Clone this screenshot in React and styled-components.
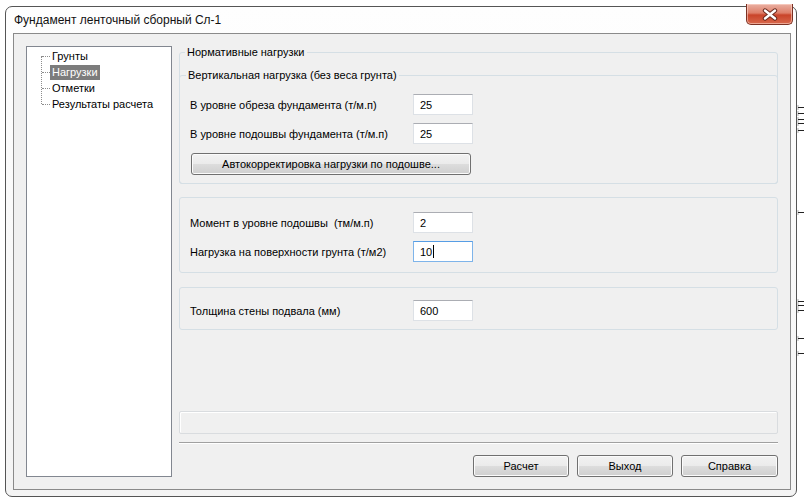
import React from "react";
import styled, { createGlobalStyle } from "styled-components";

const GlobalStyle = createGlobalStyle`
  html, body {
    margin: 0;
    padding: 0;
    background: #fff;
  }
  body {
    font-family: "Liberation Sans", Arial, sans-serif;
    font-size: 11px;
    color: #000;
  }
`;

const UI_FONT = `"Liberation Sans", Arial, sans-serif`;

const Desktop = styled.div`
  display: flex;
  align-items: flex-start;
  width: 804px;
  height: 501px;
  padding-left: 5px;
  box-sizing: border-box;
  overflow: hidden;
`;

const Window = styled.div`
  margin-top: 6px;
  width: 792px;
  height: 491px;
  flex: none;
  box-sizing: border-box;
  border: 1px solid #555;
  border-radius: 7px;
  background: linear-gradient(#fefefe, #f4f4f4);
  display: flex;
  flex-direction: column;
  padding: 0 5px 6px 7px;
`;

const TitleBar = styled.div`
  height: 26px;
  flex: none;
  display: flex;
  justify-content: space-between;
  align-items: flex-start;
`;

const Title = styled.div`
  padding: 6px 0 0 1px;
  font-size: 12px;
  line-height: 15px;
  color: #111;
`;

const CloseButton = styled.div`
  width: 47px;
  height: 21px;
  margin: -3px -2px 0 0;
  box-sizing: border-box;
  border: 1px solid #7b3123;
  border-top: none;
  border-radius: 0 0 5px 5px;
  background: linear-gradient(#eab0a3 0%, #de7f69 45%, #c9442a 55%, #d8684c 100%);
  box-shadow: inset 0 0 0 1px rgba(255, 220, 210, 0.55);
  display: flex;
  align-items: center;
  justify-content: center;
`;

const Client = styled.div`
  flex: 1;
  display: flex;
  gap: 7px;
  padding: 12px;
  border: 1px solid #8a8a8a;
  background: #f0f0f0;
`;

const TreePanel = styled.div`
  width: 146px;
  flex: none;
  box-sizing: border-box;
  border: 1px solid #828790;
  background: #fff;
`;

const TreeList = styled.div`
  position: relative;
  padding-top: 1px;

  &::before {
    content: "";
    position: absolute;
    left: 14px;
    top: 9px;
    height: 48px;
    border-left: 1px dotted #8d8d8d;
  }
`;

const TreeRow = styled.div`
  position: relative;
  height: 16px;
  display: flex;
  align-items: center;
  padding-left: 23px;

  &::before {
    content: "";
    position: absolute;
    left: 15px;
    width: 8px;
    top: 8px;
    border-top: 1px dotted #8d8d8d;
  }
`;

const TreeLabel = styled.span`
  padding: 0 2px;
  height: 15px;
  line-height: 15px;
  white-space: nowrap;
  background: ${(p) => (p.$selected ? "#7c7c7c" : "transparent")};
  color: ${(p) => (p.$selected ? "#fff" : "#000")};
`;

const Content = styled.div`
  flex: 1;
  display: flex;
  flex-direction: column;
`;

const Group = styled.fieldset`
  margin: ${(p) => p.$margin || "0"};
  padding: ${(p) => p.$padding || "0 0 0 10px"};
  border: 1px solid #d5dfe5;
  border-radius: 3px;
  min-width: 0;
`;

const Legend = styled.legend`
  margin-left: ${(p) => p.$indent ?? 5}px;
  padding: 0 2px;
  line-height: 13px;
  color: #000;
`;

const Row = styled.div`
  display: grid;
  grid-template-columns: 223px 60px;
  align-items: center;
  height: 21px;
  margin-bottom: ${(p) => p.$gap ?? 8}px;
`;

const FieldLabel = styled.span`
  white-space: pre;
`;

const TextBox = styled.div`
  width: 60px;
  height: 21px;
  box-sizing: border-box;
  border: 1px solid ${(p) => (p.$focused ? "#7eb4ea" : "#dde1e6")};
  border-top-color: ${(p) => (p.$focused ? "#569de5" : "#abadb3")};
  background: #fff;
  padding-left: 6px;
  display: flex;
  align-items: center;
`;

const Caret = styled.span`
  width: 1px;
  height: 13px;
  margin-left: 1px;
  background: #000;
`;

const PushButton = styled.button`
  width: ${(p) => p.$width}px;
  height: 22px;
  margin: ${(p) => p.$margin || "0"};
  padding: 0;
  box-sizing: border-box;
  border: 1px solid #707070;
  border-radius: 3px;
  background: linear-gradient(#f2f2f2 0%, #ebebeb 49%, #dddddd 51%, #cfcfcf 100%);
  box-shadow: inset 0 0 0 1px #fbfbfb;
  font-family: ${UI_FONT};
  font-size: 11px;
  color: #000;
`;

const Spacer = styled.div`
  flex: 1;
`;

const StatusField = styled.div`
  height: 23px;
  box-sizing: border-box;
  border: 1px solid #d9dcdf;
  border-radius: 2px;
  box-shadow: inset 1px 1px 0 #fff;
`;

const Separator = styled.div`
  margin: 8px 0 11px;
  border-top: 1px solid #a0a0a0;
  border-bottom: 1px solid #fff;
`;

const ButtonBar = styled.div`
  display: flex;
  justify-content: flex-end;
  gap: 8px;
`;

const Backdrop = styled.svg`
  flex: none;
  display: block;
`;

const treeItems = ["Грунты", "Нагрузки", "Отметки", "Результаты расчета"];

const Field = ({ label, value, focused, gap }) => (
  <Row $gap={gap}>
    <FieldLabel>{label}</FieldLabel>
    <TextBox $focused={focused}>
      {value}
      {focused && <Caret />}
    </TextBox>
  </Row>
);

// tick marks of the application window behind the dialog
const backTicks = [107, 113, 119, 123, 130, 212, 301, 305, 310, 338, 353];

export default function App() {
  return (
    <>
      <GlobalStyle />
      <Desktop>
        <Window>
          <TitleBar>
            <Title>Фундамент ленточный сборный Сл-1</Title>
            <CloseButton>
              <svg width="16" height="13" viewBox="0 0 16 13">
                <path d="M3 2.5 L13 10.5 M13 2.5 L3 10.5" stroke="#6b2a1e" strokeWidth="4.4" strokeLinecap="round" />
                <path d="M3 2.5 L13 10.5 M13 2.5 L3 10.5" stroke="#fff" strokeWidth="2.4" strokeLinecap="round" />
              </svg>
            </CloseButton>
          </TitleBar>

          <Client>
            <TreePanel>
              <TreeList>
                {treeItems.map((item) => (
                  <TreeRow key={item}>
                    <TreeLabel $selected={item === "Нагрузки"}>{item}</TreeLabel>
                  </TreeRow>
                ))}
              </TreeList>
            </TreePanel>

            <Content>
              <Group $padding="10px 0 0 0">
                <Legend $indent={5}>Нормативные нагрузки</Legend>
                <Group $margin="0 -1px -1px -1px" $padding="12px 0 8px 10px">
                  <Legend $indent={-4}>Вертикальная нагрузка (без веса грунта)</Legend>
                  <Field label="В уровне обреза фундамента (т/м.п)" value="25" />
                  <Field label="В уровне подошвы фундамента (т/м.п)" value="25" gap={9} />
                  <PushButton $width={280} $margin="0 0 0 1px">
                    Автокорректировка нагрузки по подошве...
                  </PushButton>
                </Group>
              </Group>

              <Group $margin="13px 0 0" $padding="14px 0 2px 10px">
                <Field label="Момент в уровне подошвы  (тм/м.п)" value="2" />
                <Field label="Нагрузка на поверхности грунта (т/м2)" value="10" focused />
              </Group>

              <Group $margin="14px 0 0" $padding="12px 0 0 10px">
                <Field label="Толщина стены подвала (мм)" value="600" />
              </Group>

              <Spacer />
              <StatusField />
              <Separator />
              <ButtonBar>
                <PushButton $width={96}>Расчет</PushButton>
                <PushButton $width={96}>Выход</PushButton>
                <PushButton $width={97}>Справка</PushButton>
              </ButtonBar>
            </Content>
          </Client>
        </Window>

        <Backdrop width="7" height="501" viewBox="0 0 7 501">
          {backTicks.map((y) => (
            <g key={y}>
              <rect x="0" y={y - 2} width="2" height="5" fill="#d8d8d8" />
              <line x1="1" y1={y + 0.5} x2="7" y2={y + 0.5} stroke="#222" strokeWidth="1" />
            </g>
          ))}
        </Backdrop>
      </Desktop>
    </>
  );
}
